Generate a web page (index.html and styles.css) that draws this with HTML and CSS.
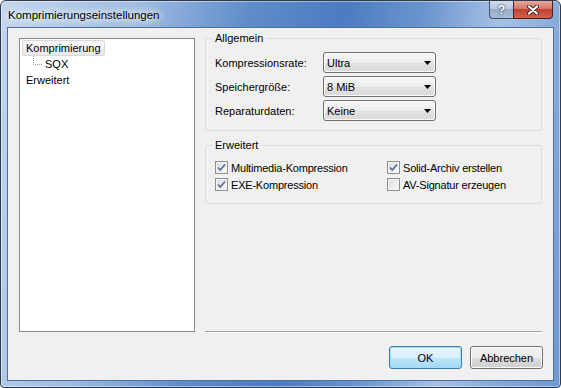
FILE: index.html
```html
<!DOCTYPE html>
<html lang="de">
  <head>
    <meta charset="UTF-8" />
    <meta name="viewport" content="width=device-width, initial-scale=1.0" />
    <title>Komprimierungseinstellungen</title>
    <link rel="stylesheet" href="styles.css">
  </head>
  <body>
    <div class="window">
      <!-- Title bar -->
      <div class="titlebar">
        <span class="title">Komprimierungseinstellungen</span>
        <div class="caption-buttons">
          <span class="cap cap-help">?</span>
          <span class="cap cap-close">
            <svg width="12" height="10" viewBox="0 0 12 10">
              <path d="M2 1.5 L10 8.5 M10 1.5 L2 8.5" stroke="#3b2420" stroke-width="4" stroke-linecap="round" fill="none" />
              <path d="M2 1.5 L10 8.5 M10 1.5 L2 8.5" stroke="#fff" stroke-width="2.2" stroke-linecap="round" fill="none" />
            </svg>
          </span>
        </div>
      </div>

      <!-- Client area -->
      <div class="client">
        <div class="main">
          <ul class="tree">
            <li class="tree-row"><span class="tree-item selected">Komprimierung</span></li>
            <li class="tree-row child">
              <svg class="connector" width="11" height="16" viewBox="0 0 11 16">
                <path d="M0.5 0 V8.5 H10" stroke="#a0a0a0" stroke-width="1" stroke-dasharray="1 1" fill="none" />
              </svg>
              <span class="tree-item">SQX</span>
            </li>
            <li class="tree-row"><span class="tree-item">Erweitert</span></li>
          </ul>

          <div class="settings">
            <fieldset class="group">
              <legend>Allgemein</legend>
              <div class="field-list">
                <div class="field-row">
                  <label>Kompressionsrate:</label>
                  <div class="combo"><span>Ultra</span><svg width="7" height="4" viewBox="0 0 7 4"><path d="M0 0 H7 L3.5 4 Z" fill="#000" /></svg></div>
                </div>
                <div class="field-row">
                  <label>Speichergröße:</label>
                  <div class="combo"><span>8 MiB</span><svg width="7" height="4" viewBox="0 0 7 4"><path d="M0 0 H7 L3.5 4 Z" fill="#000" /></svg></div>
                </div>
                <div class="field-row">
                  <label>Reparaturdaten:</label>
                  <div class="combo"><span>Keine</span><svg width="7" height="4" viewBox="0 0 7 4"><path d="M0 0 H7 L3.5 4 Z" fill="#000" /></svg></div>
                </div>
              </div>
            </fieldset>

            <fieldset class="group group-advanced">
              <legend>Erweitert</legend>
              <div class="check-grid">
                <div class="check">
                  <span class="box"><svg width="11" height="11" viewBox="0 0 11 11"><path d="M2 5.5 L4.3 8 L9 2.5" stroke="#5a6f9c" stroke-width="1.8" fill="none" /></svg></span>
                  Multimedia-Kompression
                </div>
                <div class="check">
                  <span class="box"><svg width="11" height="11" viewBox="0 0 11 11"><path d="M2 5.5 L4.3 8 L9 2.5" stroke="#5a6f9c" stroke-width="1.8" fill="none" /></svg></span>
                  Solid-Archiv erstellen
                </div>
                <div class="check">
                  <span class="box"><svg width="11" height="11" viewBox="0 0 11 11"><path d="M2 5.5 L4.3 8 L9 2.5" stroke="#5a6f9c" stroke-width="1.8" fill="none" /></svg></span>
                  EXE-Kompression
                </div>
                <div class="check"><span class="box"></span>AV-Signatur erzeugen</div>
              </div>
            </fieldset>

            <div class="separator"></div>
          </div>
        </div>

        <div class="buttons">
          <button class="btn btn-default">OK</button>
          <button class="btn">Abbrechen</button>
        </div>
      </div>
    </div>
  </body>
</html>
```

FILE: styles.css
```css
body {
  margin: 0;
  padding: 0;
  background: #fff;
  font-family: "Liberation Sans", Arial, sans-serif;
  font-size: 11px;
  color: #000;
}
.window {
  box-sizing: border-box;
  width: 561px;
  height: 388px;
  display: flex;
  flex-direction: column;
  border: 1px solid #2f3b4c;
  border-radius: 6px 6px 4px 4px;
  background: linear-gradient(100deg, #c2d6ee 0%, #9fbce2 22%, #5f8cca 40%, #4b7cc0 55%, #6b95cf 68%, #a6c1e5 80%, #86a9d9 90%, #6f97d0 100%);
  box-shadow: inset 0 0 0 1px rgba(255, 255, 255, 0.45);
  overflow: hidden;
}
/* Title bar */
.titlebar {
  height: 27px;
  display: flex;
  align-items: center;
  padding: 0 7px 0 7px;
}
.title {
  font-size: 11.5px;
  color: #000;
  text-shadow: 0 0 6px #fff, 0 0 10px #fff, 0 0 14px rgba(255, 255, 255, 0.9);
}
.caption-buttons {
  margin-left: auto;
  align-self: flex-start;
  display: flex;
  height: 18px;
}
.cap {
  box-sizing: border-box;
  height: 18px;
  display: flex;
  align-items: center;
  justify-content: center;
  border: 1px solid #3d4f6b;
  border-top: none;
}
.cap-help {
  width: 24px;
  border-radius: 0 0 0 4px;
  border-right: none;
  background: linear-gradient(#d3deec 0%, #b7c8de 45%, #97acc9 50%, #a9bdd6 100%);
  color: #fff;
  font-weight: bold;
  font-size: 13px;
  text-shadow: 0 0 1px #2c3a52, 0 0 2px #2c3a52;
}
.cap-close {
  width: 40px;
  border-radius: 0 0 4px 0;
  border-color: #4a1f1a;
  background: linear-gradient(#e8a898 0%, #d4776a 45%, #c2412f 50%, #d2624d 100%);
}
/* Client area */
.client {
  flex: 1;
  margin: 0 7px 7px 7px;
  background: #f0f0f0;
  display: flex;
  flex-direction: column;
  box-shadow: 0 0 0 1px #4f6f9c;
}
.main {
  display: flex;
  align-items: flex-start;
}
/* Tree */
.tree {
  box-sizing: border-box;
  list-style: none;
  margin: 10px 0 0 11px;
  padding: 1px 0 0 0;
  width: 176px;
  height: 294px;
  background: #fff;
  border: 1px solid #828790;
}
.tree-row {
  height: 16px;
  display: flex;
  align-items: center;
  padding-left: 2px;
}
.tree-row.child {
  padding-left: 13px;
}
.connector {
  display: block;
}
.tree-item {
  box-sizing: border-box;
  height: 16px;
  line-height: 14px;
  padding: 0 3px;
  border: 1px solid transparent;
}
.tree-row.child .tree-item {
  padding-left: 0;
}
.tree-item.selected {
  border-color: #d9d9d9;
  border-radius: 2px;
  background: linear-gradient(#fafafa, #e8e8e8);
}
/* Settings column */
.settings {
  box-sizing: border-box;
  width: 337px;
  height: 302px;
  margin: 3px 0 0 10px;
  display: flex;
  flex-direction: column;
}
.group {
  margin: 0;
  padding: 7px 9px 9px 9px;
  border: 1px solid #d5dfe5;
  border-radius: 3px;
  min-width: 0;
}
.group legend {
  margin-left: -3px;
  padding: 0 3px;
  line-height: 14px;
}
.group-advanced {
  margin-top: 7px;
  padding-bottom: 10px;
}
.field-list {
  display: flex;
  flex-direction: column;
  gap: 3px;
}
.field-row {
  display: flex;
  align-items: center;
  height: 21px;
}
.field-row label {
  width: 108px;
}
.combo {
  box-sizing: border-box;
  width: 113px;
  height: 21px;
  display: flex;
  align-items: center;
  justify-content: space-between;
  padding: 0 4px 0 3px;
  border: 1px solid #707070;
  border-radius: 3px;
  background: linear-gradient(#f6f6f6 0%, #ececec 50%, #e2e2e2 51%, #d9d9d9 100%);
  box-shadow: inset 0 0 0 1px #fbfbfb;
}
.check-grid {
  display: grid;
  grid-template-columns: 172px auto;
  grid-auto-rows: 17px;
}
.check {
  display: flex;
  align-items: center;
  letter-spacing: -0.2px;
}
.box {
  box-sizing: border-box;
  width: 13px;
  height: 13px;
  margin-right: 3px;
  display: flex;
  align-items: center;
  justify-content: center;
  border: 1px solid #8e8f8f;
  background: linear-gradient(135deg, #dcdcdc, #fbfbfb);
  box-shadow: inset 0 0 0 1px #f4f4f4;
}
.separator {
  margin-top: auto;
  height: 0;
  border-top: 1px solid #a0a0a0;
  border-bottom: 1px solid #fff;
}
/* Dialog buttons */
.buttons {
  display: flex;
  justify-content: flex-end;
  gap: 8px;
  margin-top: 13px;
  padding-right: 10px;
}
.btn {
  box-sizing: border-box;
  width: 73px;
  height: 23px;
  padding: 0;
  font-family: "Liberation Sans", Arial, sans-serif;
  font-size: 11px;
  color: #000;
  border: 1px solid #707070;
  border-radius: 3px;
  background: linear-gradient(#f2f2f2 0%, #ebebeb 50%, #dddddd 51%, #cfcfcf 100%);
  box-shadow: inset 0 0 0 1px #fcfcfc;
}
.btn-default {
  border-color: #3c7fb1;
  background: linear-gradient(#eaf6fd 0%, #d9f0fc 50%, #bee6fd 51%, #a7d9f5 100%);
  box-shadow: inset 0 0 0 1px #9fdcf8;
}
```
